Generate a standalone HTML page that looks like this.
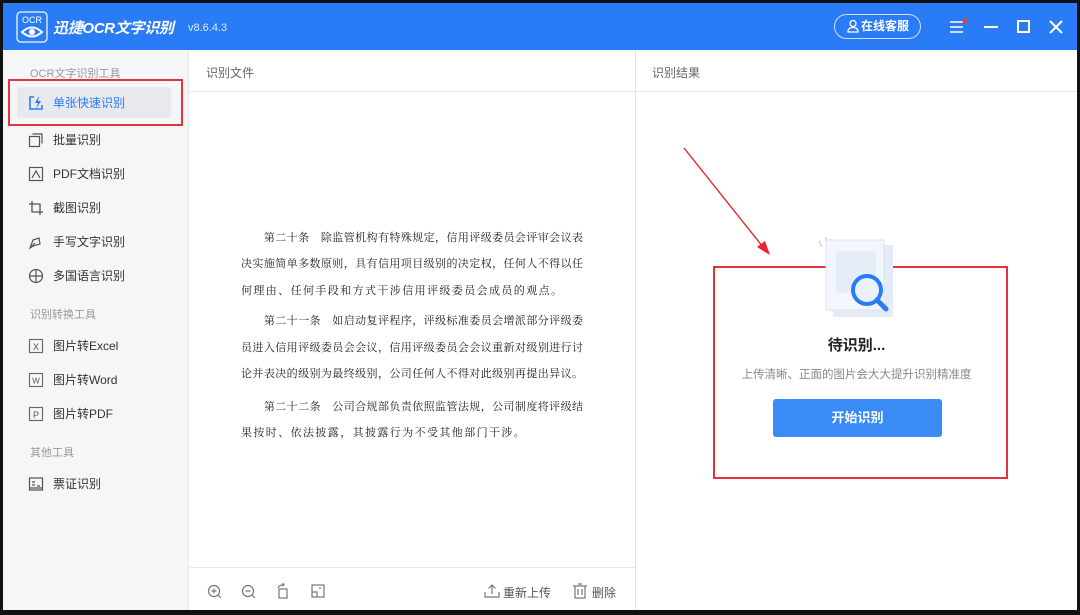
<!DOCTYPE html>
<html><head><meta charset="utf-8"><style>
*{margin:0;padding:0;box-sizing:border-box}
body{width:1080px;height:615px;background:#111;position:relative;overflow:hidden;font-family:"Liberation Sans","Noto Sans CJK SC",sans-serif}
.abs{position:absolute}
#win{position:absolute;left:3px;top:3px;width:1074px;height:607px;background:#fff;overflow:hidden}
#title{position:absolute;left:0;top:0;width:1074px;height:47px;background:#2a7cf6}
#side{position:absolute;left:0;top:47px;width:186px;height:560px;background:#f5f6f8;border-right:1px solid #e4e6ea}
.it{position:absolute;left:50px;font-size:12px;color:#333;line-height:16px}
.hd{position:absolute;left:27px;font-size:11px;color:#999;line-height:14px}
.ic{position:absolute;left:25px;width:16px;height:16px}
.txt{position:absolute;left:238px;width:342px;font-family:"Liberation Serif","Noto Serif CJK SC",serif;font-size:11px;color:#222;line-height:14px}
.txt div{position:absolute;left:0;width:342px;text-align:justify;text-align-last:justify;white-space:nowrap}
</style></head><body>
<div id="win">
<div id="title">
 <svg class="abs" style="left:13px;top:8px" width="32" height="32" viewBox="0 0 32 32"><rect x="1" y="1" width="30" height="30" rx="4" fill="none" stroke="#fff" stroke-width="1.5" opacity=".8"/><text x="16" y="12" font-size="9" fill="#fff" text-anchor="middle" font-family="Liberation Sans">OCR</text><path d="M6 21 Q16 12 26 21 Q16 30 6 21Z" fill="none" stroke="#fff" stroke-width="2"/><circle cx="16" cy="21" r="3" fill="#fff"/></svg>
 <div class="abs" style="left:50px;top:14px;font-size:15px;font-weight:bold;font-style:italic;color:#fff;letter-spacing:-0.3px;white-space:nowrap">迅捷OCR文字识别</div>
 <div class="abs" style="left:185px;top:19px;font-size:11px;color:#dce8ff">v8.6.4.3</div>
 <div class="abs" style="left:831px;top:11px;width:87px;height:25px;border:1.5px solid #cfe0ff;border-radius:13px;color:#fff;font-size:12px;font-weight:bold;line-height:22px;padding-left:26px">在线客服</div>
 <svg class="abs" style="left:843px;top:16px" width="14" height="14" viewBox="0 0 14 14"><circle cx="7" cy="4.5" r="3" fill="none" stroke="#fff" stroke-width="1.3"/><path d="M2 13 Q2 8.5 7 8.5 Q12 8.5 12 13Z" fill="none" stroke="#fff" stroke-width="1.3"/></svg>
 <svg class="abs" style="left:945px;top:15px" width="20" height="18"><path d="M2 4H15M2 9H15M2 14H15" stroke="#fff" stroke-width="1.6"/><circle cx="17" cy="3" r="2.5" fill="#f03a3a"/></svg>
 <div class="abs" style="left:981px;top:23px;width:14px;height:2px;background:#fff"></div>
 <div class="abs" style="left:1014px;top:17px;width:13px;height:13px;border:2px solid #fff"></div>
 <svg class="abs" style="left:1046px;top:17px" width="14" height="14"><path d="M1 1L13 13M13 1L1 13" stroke="#fff" stroke-width="2"/></svg>
</div>
<div id="side">
 <div class="hd" style="top:17px">OCR文字识别工具</div>
 <div class="abs" style="left:14px;top:37px;width:154px;height:31px;background:#e7e9ee;border-radius:3px"></div>
 <div class="abs" style="left:5px;top:29px;width:175px;height:47px;border:2px solid #e8323a"></div>
 <svg class="ic" style="top:45px" viewBox="0 0 16 16"><path d="M6 2H2V14H14V10" fill="none" stroke="#2a7cf6" stroke-width="1.6"/><path d="M11 1L7 8H10L8 14L13 6H10Z" fill="#2a7cf6"/></svg>
 <div class="it" style="top:45px;color:#2a7cf6">单张快速识别</div>
 <svg class="ic" style="top:82px" viewBox="0 0 16 16" fill="none" stroke="#555" stroke-width="1.2"><rect x="1.5" y="4.5" width="10" height="10"/><path d="M4.5 2H14V11.5"/></svg>
 <div class="it" style="top:82px">批量识别</div>
 <svg class="ic" style="top:116px" viewBox="0 0 16 16" fill="none" stroke="#555" stroke-width="1.2"><rect x="1.5" y="1.5" width="13" height="13"/><path d="M4 12L8 5L12 12"/></svg>
 <div class="it" style="top:116px">PDF文档识别</div>
 <svg class="ic" style="top:150px" viewBox="0 0 16 16" fill="none" stroke="#555" stroke-width="1.3"><path d="M1 4H12V15M4 1V12H15"/></svg>
 <div class="it" style="top:150px">截图识别</div>
 <svg class="ic" style="top:184px" viewBox="0 0 16 16" fill="none" stroke="#555" stroke-width="1.2"><path d="M2 14L5 6L11 4L12 10L5 12Z M2 14L7 9"/></svg>
 <div class="it" style="top:184px">手写文字识别</div>
 <svg class="ic" style="top:218px" viewBox="0 0 16 16" fill="none" stroke="#555" stroke-width="1.2"><circle cx="8" cy="8" r="6.5"/><path d="M1.5 8H14.5M8 1.5V14.5"/></svg>
 <div class="it" style="top:218px">多国语言识别</div>
 <div class="hd" style="top:258px">识别转换工具</div>
 <svg class="ic" style="top:288px" viewBox="0 0 16 16"><rect x="1.5" y="1.5" width="13" height="13" fill="none" stroke="#666" stroke-width="1.1"/><text x="8" y="12" font-size="9" text-anchor="middle" fill="#555" font-family="Liberation Sans">X</text></svg>
 <div class="it" style="top:288px">图片转Excel</div>
 <svg class="ic" style="top:322px" viewBox="0 0 16 16"><rect x="1.5" y="1.5" width="13" height="13" fill="none" stroke="#666" stroke-width="1.1"/><text x="8" y="11.5" font-size="8" text-anchor="middle" fill="#555" font-family="Liberation Sans">W</text></svg>
 <div class="it" style="top:322px">图片转Word</div>
 <svg class="ic" style="top:356px" viewBox="0 0 16 16"><rect x="1.5" y="1.5" width="13" height="13" fill="none" stroke="#666" stroke-width="1.1"/><text x="8" y="12" font-size="9" text-anchor="middle" fill="#555" font-family="Liberation Sans">P</text></svg>
 <div class="it" style="top:356px">图片转PDF</div>
 <div class="hd" style="top:396px">其他工具</div>
 <svg class="ic" style="top:426px" viewBox="0 0 16 16" fill="none" stroke="#555" stroke-width="1.2"><rect x="1.5" y="2" width="13" height="12"/><path d="M4 6H7M4 9H7M9 10H12M1.5 12H14.5"/></svg>
 <div class="it" style="top:426px">票证识别</div>
</div>
<!-- middle -->
<div class="abs" style="left:203px;top:61px;font-size:12px;color:#666">识别文件</div>
<div class="abs" style="left:187px;top:88px;width:445px;height:1px;background:#e6e6e6"></div>
<div class="abs" style="left:632px;top:47px;width:1px;height:560px;background:#e4e4e4"></div>
<div class="abs" style="left:187px;top:564px;width:445px;height:1px;background:#e8e8e8"></div>
<div class="txt" style="top:228px">
 <div style="top:0">　　第二十条　除监管机构有特殊规定，信用评级委员会评审会议表</div>
 <div style="top:26px">决实施简单多数原则，具有信用项目级别的决定权，任何人不得以任</div>
 <div style="top:53px;text-align-last:left;letter-spacing:1.4px">何理由、任何手段和方式干涉信用评级委员会成员的观点。</div>
 <div style="top:83px">　　第二十一条　如启动复评程序，评级标准委员会增派部分评级委</div>
 <div style="top:110px">员进入信用评级委员会会议，信用评级委员会会议重新对级别进行讨</div>
 <div style="top:136px">论并表决的级别为最终级别，公司任何人不得对此级别再提出异议。</div>
 <div style="top:169px">　　第二十二条　公司合规部负责依照监管法规，公司制度将评级结</div>
 <div style="top:195px;text-align-last:left;letter-spacing:1.4px">果按时、依法披露，其披露行为不受其他部门干涉。</div>
</div>
<svg class="abs" style="left:203px;top:580px" width="130" height="18" fill="none" stroke="#777" stroke-width="1.2"><circle cx="8" cy="8" r="5.5"/><path d="M12 12L15 15M5.5 8H10.5M8 5.5V10.5"/><circle cx="42" cy="8" r="5.5"/><path d="M46 12L49 15M39.5 8H44.5"/><rect x="73" y="6" width="8" height="9"/><path d="M72 5Q74 1 78 2M77 0L78 2L76 3"/><rect x="106" y="2" width="12" height="12"/><path d="M106 9H111V14M113 5H115"/></svg>
<svg class="abs" style="left:481px;top:580px" width="16" height="16" fill="none" stroke="#777" stroke-width="1.2"><path d="M1 9V14H15V9M8 11V2M4.5 5.5L8 2L11.5 5.5"/></svg>
<div class="abs" style="left:500px;top:581px;font-size:12px;color:#555">重新上传</div>
<svg class="abs" style="left:569px;top:580px" width="16" height="16" fill="none" stroke="#777" stroke-width="1.2"><path d="M1 3H15M3 3V15H13V3M6 1H10M6 6V12M10 6V12"/></svg>
<div class="abs" style="left:589px;top:581px;font-size:12px;color:#555">删除</div>
<!-- right -->
<div class="abs" style="left:649px;top:61px;font-size:12px;color:#666">识别结果</div>
<div class="abs" style="left:633px;top:88px;width:441px;height:1px;background:#e6e6e6"></div>
<svg class="abs" style="left:675px;top:140px" width="100" height="115"><path d="M6 5L89 109" stroke="#e8262e" stroke-width="1.4"/><path d="M92 112L79 104L87 98Z" fill="#e8262e"/></svg>
<div class="abs" style="left:710px;top:263px;width:295px;height:213px;border:2px solid #e8323a"></div>
<svg class="abs" style="left:810px;top:230px" width="90" height="92"><path d="M6 8L9 14M13 4V12M18 6L15 12" stroke="#b8c8e6" stroke-width="1.2"/><rect x="20" y="12" width="60" height="72" fill="#e4ebf7"/><rect x="13" y="7" width="58" height="70" fill="#f3f6fc" stroke="#dbe3f2"/><rect x="23" y="18" width="40" height="42" fill="#e6edf8"/><circle cx="54" cy="57" r="14" fill="#e9f1fd" stroke="#2a7cf6" stroke-width="4"/><path d="M64 67L73 76" stroke="#2a7cf6" stroke-width="5" stroke-linecap="round"/></svg>
<div class="abs" style="left:633px;top:331px;width:441px;text-align:center;font-size:15px;font-weight:bold;color:#222">待识别...</div>
<div class="abs" style="left:633px;top:363px;width:441px;text-align:center;font-size:11.5px;color:#888">上传清晰、正面的图片会大大提升识别精准度</div>
<div class="abs" style="left:770px;top:396px;width:169px;height:38px;background:#3a8bf6;border-radius:3px;color:#fff;font-size:13px;font-weight:bold;text-align:center;line-height:38px">开始识别</div>
</div>
</body></html>
